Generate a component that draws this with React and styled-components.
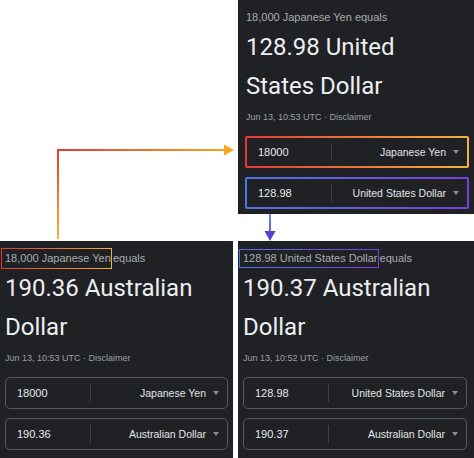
import React from 'react';
import styled, { createGlobalStyle, css } from 'styled-components';

const GlobalStyle = createGlobalStyle`
  body {
    margin: 0;
    background: #ffffff;
    font-family: "Liberation Sans", Arial, sans-serif;
  }
`;

const WARM = ['#e53935', '#f4b23a'];
const COOL = ['#4f74e3', '#7a3fd8'];

const Canvas = styled.div`
  position: relative;
  width: 474px;
  height: 458px;
  display: grid;
  grid-template-columns: 233px 236px;
  grid-template-rows: 214px 217px;
  column-gap: 5px;
  row-gap: 27px;
  background: #ffffff;
  overflow: hidden;
`;

const Panel = styled.section`
  grid-column: ${({ $col }) => $col};
  grid-row: ${({ $row }) => $row};
  display: flex;
  flex-direction: column;
  background: #202124;
  padding: 0 ${({ $right }) => $right}px 5px ${({ $left }) => $left}px;
`;

const Label = styled.div`
  margin-top: 6px;
  height: 22px;
  line-height: 22px;
  font-size: 11px;
  color: #a9acb1;
  white-space: nowrap;
  padding-left: ${({ $indent }) => $indent || 0}px;
`;

const Mark = styled.span`
  display: inline-block;
  line-height: 13px;
  padding: ${({ $tall }) => ($tall ? '3px' : '2px')} 0 ${({ $tall }) => ($tall ? '3px' : '2px')} 3px;
  margin-left: -4px;
  margin-right: -2px;
  border: 1.5px solid transparent;
  background: linear-gradient(#202124, #202124) padding-box,
    linear-gradient(90deg, ${({ $from }) => $from}, ${({ $to }) => $to}) border-box;
`;

const Title = styled.div`
  font-family: Roboto, "Liberation Sans", sans-serif;
  font-size: 24px;
  line-height: 39px;
  color: #eceef1;
  white-space: nowrap;
  padding-left: ${({ $indent }) => $indent || 0}px;
`;

const Stamp = styled.div`
  margin-top: 3px;
  font-size: 9px;
  line-height: 16px;
  color: #9aa0a6;
  padding-left: ${({ $indent }) => $indent || 0}px;
`;

const plainBorder = css`
  border: 1px solid #55585d;
  border-radius: 5px;
`;

const glowBorder = css`
  border: 2px solid transparent;
  border-radius: 2px;
  background: linear-gradient(#202124, #202124) padding-box,
    linear-gradient(90deg, ${({ $from }) => $from}, ${({ $to }) => $to}) border-box;
`;

const Field = styled.div`
  box-sizing: border-box;
  height: 32px;
  margin-top: ${({ $gap }) => $gap}px;
  display: flex;
  align-items: center;
  ${({ $from }) => ($from ? glowBorder : plainBorder)}
`;

const Amount = styled.span`
  width: 73px;
  padding-left: 11px;
  font-size: 11px;
  color: #e8eaed;
`;

const Divider = styled.span`
  width: 1px;
  height: 18px;
  background: #3e4145;
`;

const Currency = styled.span`
  flex: 1;
  text-align: right;
  margin-right: 7px;
  font-size: 10.5px;
  color: #e3e5e8;
  white-space: nowrap;
`;

const Caret = styled.span`
  width: 0;
  height: 0;
  margin-right: 8px;
  border-left: 3.5px solid transparent;
  border-right: 3.5px solid transparent;
  border-top: 4px solid #8a8e93;
`;

const Overlay = styled.svg`
  position: absolute;
  left: 0;
  top: 0;
  pointer-events: none;
`;

const CurrencyField = ({ amount, currency, gap, glow }) => (
  <Field $gap={gap} $from={glow && glow[0]} $to={glow && glow[1]}>
    <Amount>{amount}</Amount>
    <Divider />
    <Currency>{currency}</Currency>
    <Caret />
  </Field>
);

const Converter = ({ col, row, left, right, indent, label, mark, tall, lines, stamp, fields }) => (
  <Panel $col={col} $row={row} $left={left} $right={right}>
    <Label $indent={indent}>
      {mark ? (
        <>
          <Mark $from={mark[0]} $to={mark[1]} $tall={tall}>
            {label}
          </Mark>{' '}
          equals
        </>
      ) : (
        `${label} equals`
      )}
    </Label>
    <Title $indent={indent}>
      {lines[0]}
      <br />
      {lines[1]}
    </Title>
    <Stamp $indent={indent}>{stamp} · Disclaimer</Stamp>
    {fields.map((f, i) => (
      <CurrencyField key={f.currency} gap={i === 0 ? 11 : 9} {...f} />
    ))}
  </Panel>
);

const Arrows = () => (
  <Overlay width="474" height="458" viewBox="0 0 474 458">
    <defs>
      <linearGradient id="warmUp" gradientUnits="userSpaceOnUse" x1="58" y1="238" x2="58" y2="150">
        <stop offset="0" stopColor="#f6b53b" />
        <stop offset="1" stopColor="#e53935" />
      </linearGradient>
      <linearGradient id="warmRight" gradientUnits="userSpaceOnUse" x1="58" y1="150" x2="226" y2="150">
        <stop offset="0" stopColor="#e53935" />
        <stop offset="1" stopColor="#f5a623" />
      </linearGradient>
      <linearGradient id="coolDown" gradientUnits="userSpaceOnUse" x1="270" y1="214" x2="270" y2="241">
        <stop offset="0" stopColor="#6f86ea" />
        <stop offset="1" stopColor="#5a3fd3" />
      </linearGradient>
    </defs>
    <path d="M58 239 V151" stroke="url(#warmUp)" strokeWidth="2" fill="none" />
    <path d="M57 150 H226" stroke="url(#warmRight)" strokeWidth="2" fill="none" />
    <path d="M224 144.5 L234 150 L224 155.5 Z" fill="#f5a623" />
    <path d="M270 214 V233" stroke="url(#coolDown)" strokeWidth="2" fill="none" />
    <path d="M264.5 231 L275.5 231 L270 241 Z" fill="#5a3fd3" />
  </Overlay>
);

export default function App() {
  return (
    <>
      <GlobalStyle />
      <Canvas>
        <Converter
          col={2}
          row={1}
          left={7}
          right={5}
          indent={1}
          label="18,000 Japanese Yen"
          lines={['128.98 United', 'States Dollar']}
          stamp="Jun 13, 10:53 UTC"
          fields={[
            { amount: '18000', currency: 'Japanese Yen', glow: WARM },
            { amount: '128.98', currency: 'United States Dollar', glow: COOL },
          ]}
        />
        <Converter
          col={1}
          row={2}
          left={5}
          right={5}
          label="18,000 Japanese Yen"
          mark={WARM}
          tall
          lines={['190.36 Australian', 'Dollar']}
          stamp="Jun 13, 10:53 UTC"
          fields={[
            { amount: '18000', currency: 'Japanese Yen' },
            { amount: '190.36', currency: 'Australian Dollar' },
          ]}
        />
        <Converter
          col={2}
          row={2}
          left={5}
          right={7}
          label="128.98 United States Dollar"
          mark={COOL}
          lines={['190.37 Australian', 'Dollar']}
          stamp="Jun 13, 10:52 UTC"
          fields={[
            { amount: '128.98', currency: 'United States Dollar' },
            { amount: '190.37', currency: 'Australian Dollar' },
          ]}
        />
        <Arrows />
      </Canvas>
    </>
  );
}
